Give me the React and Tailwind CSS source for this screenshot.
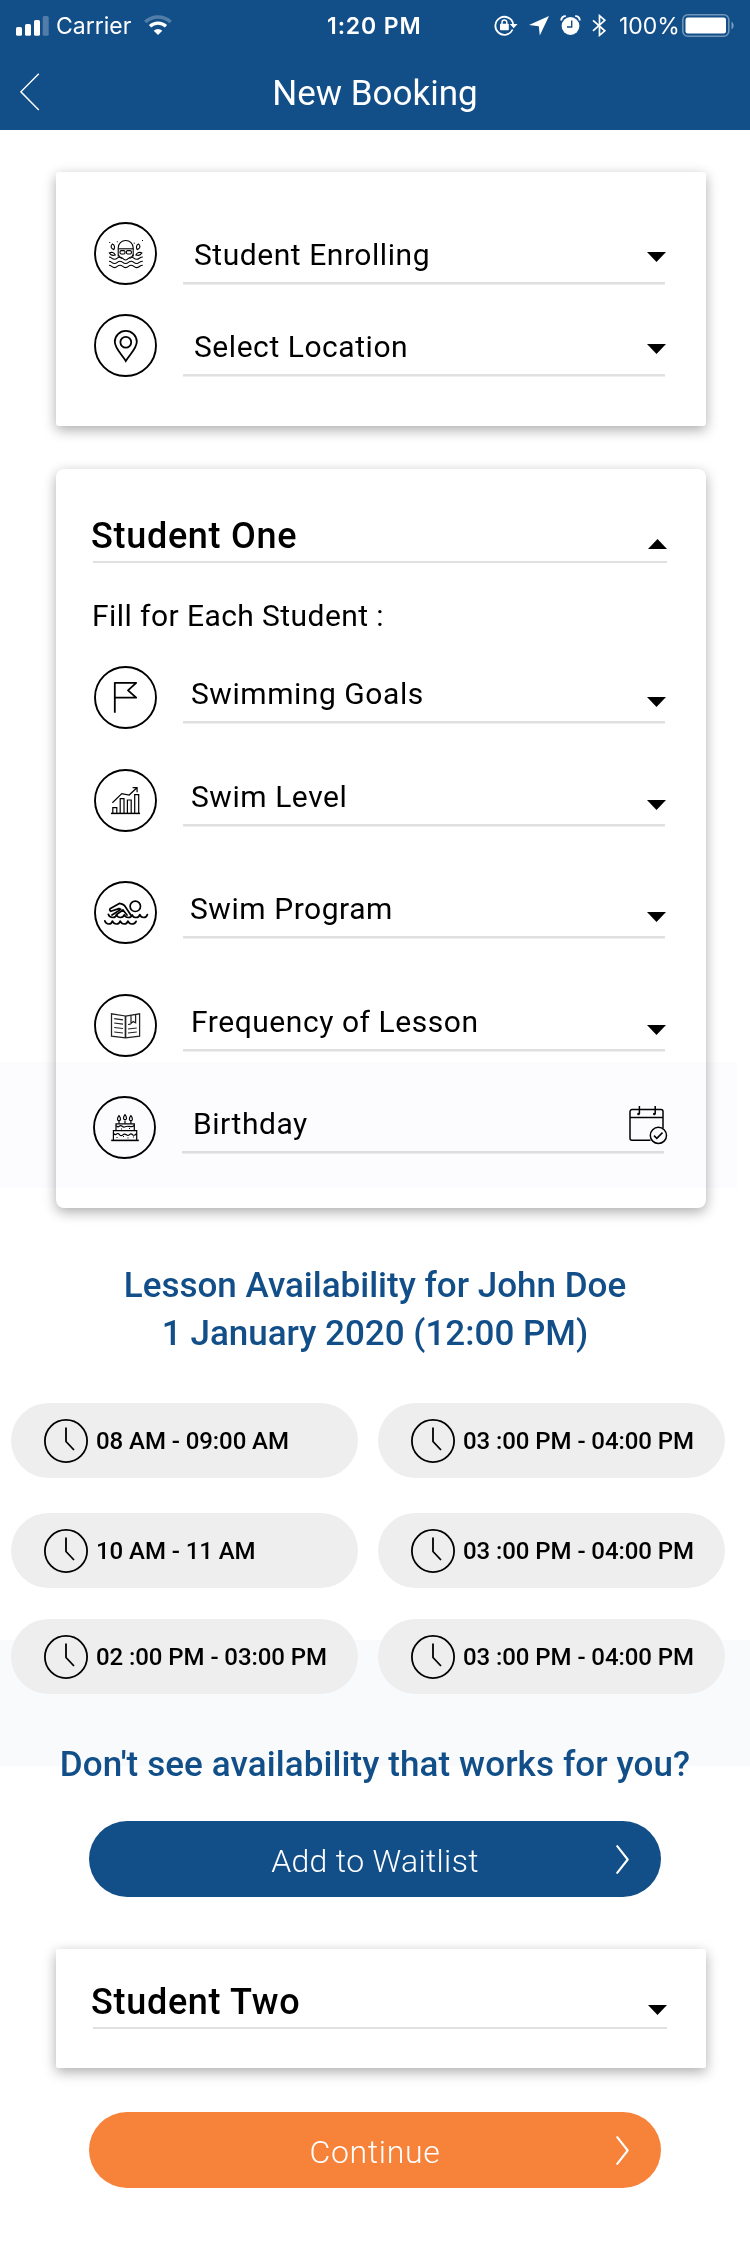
const ROBOTO = "font-['Roboto','Noto_Sans',sans-serif]";
const INTER = "font-['Inter','Liberation_Sans',sans-serif]";

function Caret({ up = false, className = "" }) {
  return (
    <svg width="19" height="10" viewBox="0 0 19 10" className={`shrink-0 ${className}`}>
      <path d={up ? "M0 10H19L9.5 0Z" : "M0 0H19L9.5 10Z"} fill="#000" />
    </svg>
  );
}

function Round({ children }) {
  return (
    <svg width="63" height="63" viewBox="0 0 63 63" fill="none" stroke="#000" strokeWidth="1.6" className="shrink-0">
      <circle cx="31.5" cy="31.5" r="30.5" strokeWidth="1.9" />
      {children}
    </svg>
  );
}

const icons = {
  swimmer: (
    <g strokeWidth="1.1">
      <path d="M24.2 34.500V26a7.500 7.500 0 0 1 15 0V34.500" />
      <path d="M24.2 26.800h15" />
      <rect x="26" y="28.600" width="5" height="3.400" rx="1.200" />
      <rect x="32.400" y="28.600" width="5" height="3.400" rx="1.200" />
      <path d="M24.500 32.500c.4 2.200 1.800 3.600 3.400 4M38.900 32.500c-.4 2.200-1.800 3.600-3.400 4" />
      <path d="M18.300 22c-2.200 2.500-1.200 4.800 1.500 5.600c1.400-2.400.9-4.600-1.500-5.600zM44.700 22c2.200 2.500 1.200 4.800-1.500 5.600c-1.400-2.400-.9-4.600 1.500-5.600z" />
      <path d="M15.300 31c2.400-1.300 4.700-.5 6 2c-2.300.8-4.500.5-6-2zM47.900 31c-2.400-1.300-4.700-.5-6 2c2.300.8 4.500.5 6-2z" />
      <path d="M15 35c2.700 0 2.700 2.300 5.500 2.300s2.800-2.300 5.500-2.300s2.700 3 5.600 3s2.800-3 5.500-3s2.700 2.300 5.500 2.300s2.800-2.300 6.200-2.300" />
      <path d="M15 39.200c2.700 0 2.700 2.300 5.500 2.300s2.800-2.300 5.500-2.300s2.700 2.300 5.600 2.300s2.800-2.300 5.500-2.300s2.700 2.300 5.500 2.300s2.800-2.300 6.200-2.300" />
      <path d="M15 43.300c2.700 0 2.700 2.300 5.500 2.300s2.800-2.300 5.500-2.300s2.700 2.300 5.600 2.300s2.800-2.300 5.500-2.300s2.700 2.300 5.500 2.300s2.800-2.300 6.200-2.300" />
      <path d="M15.200 20.500h1M22.800 19.700h1M39.800 21.300h1M48 18.500h1" />
    </g>
  ),
  pin: (
    <g strokeWidth="1.8">
      <path d="M31.800 47C28 40.500 20.800 34.500 20.800 27.800a11 11 0 0 1 22 0C42.800 34.500 35.600 40.500 31.800 47Z" />
      <circle cx="31.800" cy="28.300" r="5.400" />
    </g>
  ),
  flag: <path d="M20.800 46.800V16.800H42.200L34 24.300L42.200 31.700H20.800" strokeWidth="1.800" strokeLinejoin="round" />,
  chart: (
    <g strokeWidth="1.200">
      <path d="M17 44.400H46" strokeWidth="1.500" />
      <path d="M18.800 44V38.600h4V44M26.200 44V29.600h3.800V44M33.400 44V31h3.800V44M40.700 44V25.600h4V44" />
      <path d="M18.400 33.700L27.800 24.600L35.200 26L42.900 18.800M38.600 18.600h4.500v4.700" />
    </g>
  ),
  swim: (
    <g strokeWidth="1.700" strokeLinejoin="round" strokeLinecap="round">
      <circle cx="41.300" cy="25.300" r="5.200" />
      <path d="M36.800 34L30.500 24.500Q28.500 22.800 25.300 22.400L16.500 27.400Q14.700 29 16.800 30.300L25 27.600L26.800 28.400L18 34" />
      <path d="M29 29L22.500 33.500M29 29L33 34" />
      <path d="M14.300 33.300q1 3.200 4.700 3.200q2.800 0 3.500-2.700q1.100 2.700 4 2.700q2.900 0 3.800-2.700q1.100 2.700 4 2.700q3.300 0 3.800-2.700q1.200 2.700 4 2.700q3.100 0 3.700-3q1 3 3.900 3q2.900 0 3.700-3" />
      <path d="M10.800 39.800q1 3.200 4 3.200q3 0 3.600-3q1.200 3 4.100 3q2.900 0 3.700-3q1.200 3 4 3q3 0 3.700-3q1.200 3 4 3q3.200 0 4.200-2.600" />
    </g>
  ),
  book: (
    <g strokeWidth="1.250" stroke="#222">
      <path d="M31.500 22L17.500 19.800V42.200L31.500 43.900L45.600 42.200V19.800Z" />
      <path d="M31.500 22V44" strokeWidth="1.700" />
      <path d="M20.200 24.600l8.800 1.300M20.200 29l8.800 1.100M20.200 33.500l8.800 1M20.200 38l8.800 1M34 30.500l2.500-.3M34 35l8.800-1M34 39l8.800-1" />
      <path d="M37 21.200V29.500l2.200-1.900l2.400 1.200V20.500" />
    </g>
  ),
  cake: (
    <g strokeWidth="1.200">
      <path d="M18.200 44.400H45.800" strokeWidth="1.600" />
      <path d="M20.400 44V34.700H43.700V44M23 34.300V27.800H41.300V34.300" />
      <path d="M20.400 37.500q1.500 1.800 3.200.5t3 .9q1.700 1.400 3.200 0t3.500-.3q1.600 1.400 3.200 0t3.300.4q1.800.9 3.900-1.500" />
      <path d="M23 29.500q1.600 2 3.200.8t3 0t2.900.5t3-.5t3 .4t3.200-1.200" />
      <path d="M26 27.800V25M32 27.800V24.500M37.900 27.800V25" />
      <path d="M26 19.700c-2 2.500-2 5 0 5s2-2.500 0-5zM32 18.700c-2 2.500-2 5 0 5s2-2.500 0-5zM37.900 19.700c-2 2.500-2 5 0 5s2-2.500 0-5z" />
      <path d="M23.500 41.500h1M30 40.500h1M28 33h1M34.500 42h1M36 32.500h1M40 41h1" />
    </g>
  ),
};

function Field({ icon, label, textClass, lineClass = "h-[57px]", caretClass = "mt-[31px]", className = "", end }) {
  return (
    <div className={`flex h-[63px] items-start ${className}`}>
      <Round>{icons[icon]}</Round>
      <div className={`ml-[26px] flex w-[482px] items-start justify-between border-b-2 border-[#e0e0e0] shadow-[0_1px_0_#eeeeee] ${lineClass}`}>
        <span className={`text-[30px] leading-[40px] tracking-[0.55px] whitespace-nowrap ${textClass}`}>{label}</span>
        {end || <Caret className={`-mr-px ${caretClass}`} />}
      </div>
    </div>
  );
}

function StudentHeader({ name, up }) {
  return (
    <div className="ml-[37px] flex h-[42px] w-[574px] items-start justify-between border-b-2 border-[#e0e0e0]">
      <span className="-ml-[2px] text-[36px] leading-[30px] font-medium tracking-[0.7px]">{name}</span>
      <Caret up={up} className="mt-[18px]" />
    </div>
  );
}

function CalendarCheck() {
  return (
    <svg width="39" height="39" viewBox="0 0 39 39" fill="none" stroke="#000" strokeWidth="1.500" className="mt-[10px] -mr-[4px] shrink-0">
      <path d="M21.500 34.300H3a2 2 0 0 1-2-2V5.600a2 2 0 0 1 2-2H32a2 2 0 0 1 2 2V22.500M1 11.500H34" />
      <path d="M10.400 0V8M26.200 0V8" />
      <circle cx="9.500" cy="8" r="1.300" fill="#000" stroke="none" />
      <circle cx="25.300" cy="8" r="1.300" fill="#000" stroke="none" />
      <circle cx="29.400" cy="29.400" r="8.100" />
      <path d="M25 29.600L27.800 32.400L33.500 26.600" />
    </svg>
  );
}

function Slot({ time }) {
  return (
    <div className="flex h-[75px] w-[347px] items-center rounded-full bg-[#eeeeee] pl-[33px]">
      <svg width="44" height="44" viewBox="0 0 44 44" fill="none" stroke="#000" strokeWidth="1.800" className="shrink-0">
        <circle cx="22" cy="22" r="21.100" />
        <path d="M22 8.500V22.500L30 31" />
      </svg>
      <span className="ml-2 text-[24px] leading-[30px] font-medium tracking-[-0.07px] whitespace-nowrap">{time}</span>
    </div>
  );
}

function PillButton({ label, className }) {
  return (
    <button className={`ml-[89px] grid h-[76px] w-[572px] grid-cols-[45px_1fr_45px] items-center rounded-full text-white ${className}`}>
      <span />
      <span className="pt-[4px] text-center text-[32px] leading-[40px] font-light">{label}</span>
      <svg width="13" height="29" viewBox="0 0 13 29" fill="none" stroke="#fff" strokeWidth="2.100" strokeLinecap="round" strokeLinejoin="round">
        <path d="M1.200 1.200L11.700 14.500L1.200 27.800" />
      </svg>
    </button>
  );
}

function StatusBar() {
  return (
    <div className={`flex h-[51px] items-center text-[23px] leading-[30px] ${INTER}`}>
      <svg width="33" height="20" viewBox="0 0 33 20" fill="#fff" className="ml-4 shrink-0">
        <rect x="0" y="11" width="6" height="8.700" rx="1.500" />
        <rect x="9" y="8" width="6" height="11.700" rx="1.500" />
        <rect x="18" y="4" width="6" height="15.700" rx="1.500" />
        <rect x="26.700" y="0" width="6" height="19.700" rx="1.500" opacity=".27" />
      </svg>
      <span className="ml-[7px] w-[76px]">Carrier</span>
      <svg width="28" height="21" viewBox="0 0 28 21" fill="none" className="ml-[12px] shrink-0">
        <path d="M1.300 7A18.500 18.500 0 0 1 26.700 7" stroke="#fff" strokeWidth="3.600" opacity=".27" />
        <path d="M6 11.300A11.800 11.800 0 0 1 22 11.300" stroke="#fff" strokeWidth="3.300" />
        <path d="M14 20L9.700 15.800A6.300 6.300 0 0 1 18.300 15.800Z" fill="#fff" />
      </svg>
      <span className="ml-[155px] w-[96px] font-semibold tracking-[0.9px] whitespace-nowrap">1:20 PM</span>
      <svg width="24" height="21" viewBox="0 0 24 21" fill="none" stroke="#fff" className="ml-[71px] shrink-0">
        <path d="M18.600 14.500A9 9 0 1 1 19.200 9" strokeWidth="1.800" />
        <path d="M15.800 9H23.500L19.700 13.200Z" fill="#fff" stroke="none" />
        <rect x="6" y="8.800" width="8.800" height="6.500" rx=".8" fill="#fff" stroke="none" />
        <path d="M8 9.500V7.300a2.400 2.400 0 0 1 4.800 0V9.500" strokeWidth="1.500" />
      </svg>
      <svg width="20" height="20" viewBox="0 0 20 20" fill="#fff" className="ml-[11px] shrink-0">
        <path d="M20 0L10.800 19.500L9.800 10.200L0 9Z" />
      </svg>
      <svg width="21" height="21" viewBox="0 0 21 21" className="ml-[11px] shrink-0">
        <circle cx="10.500" cy="11" r="8.900" fill="#fff" />
        <path d="M1.300 5.500A4 4 0 0 1 5.800 1.200M19.700 5.500A4 4 0 0 0 15.200 1.200" fill="none" stroke="#fff" strokeWidth="1.900" />
        <path d="M11.700 5.500V12H7" fill="none" stroke="#124e88" strokeWidth="1.400" />
      </svg>
      <svg width="15" height="23" viewBox="0 0 15 23" fill="none" stroke="#fff" strokeWidth="1.700" className="ml-[11px] shrink-0">
        <path d="M1 6.300L12.800 16.800L7.500 21.300V1.700L12.800 6.300L1 16.800" />
      </svg>
      <span className="ml-[12px] w-[63px]">100%</span>
      <svg width="52" height="23" viewBox="0 0 52 23" fill="none" className="shrink-0">
        <rect x=".8" y=".8" width="46" height="21.400" rx="5" stroke="#fff" strokeWidth="1.600" opacity=".4" />
        <rect x="3.500" y="3.600" width="40.500" height="15.800" rx="2.200" fill="#fff" />
        <path d="M49.500 7.500a4.800 4.800 0 0 1 0 8z" fill="#fff" opacity=".45" />
      </svg>
    </div>
  );
}

const CARD = "relative ml-[56px] w-[650px] bg-white shadow-[0_4px_13px_rgba(0,0,0,0.33)]";

export default function App() {
  return (
    <div className={`relative isolate flex h-[2267px] w-[750px] flex-col overflow-hidden bg-white text-black ${ROBOTO}`}>
      {/* tinted bands: one behind the time slots, one washing over the birthday row */}
      <div className="absolute top-[1640px] left-0 -z-10 h-[126px] w-[750px] bg-[#f9fafc]" />
      <div className="pointer-events-none absolute top-[1062px] left-0 z-10 h-[126px] w-[737px] bg-[#fcfcfe] mix-blend-multiply" />

      <header className="h-[130px] shrink-0 bg-[#124e88] text-white">
        <StatusBar />
        <div className="grid h-[79px] grid-cols-[60px_1fr_60px] items-center">
          <svg width="20" height="38" viewBox="0 0 20 38" fill="none" stroke="#fff" strokeWidth="1.400" className="ml-5 mt-[2px]">
            <path d="M18.800 .7L.9 18.800L18.800 37" />
          </svg>
          <h1 className="pt-[6px] text-center text-[35px] leading-[44px]">New Booking</h1>
        </div>
      </header>

      <section className={`mt-[42px] h-[254px] shrink-0 rounded-[3px] pt-[50px] pl-[38px] ${CARD}`}>
        <Field icon="swimmer" label="Student Enrolling" textClass="mt-[13px] ml-[11px]" lineClass="h-[62px]" caretClass="mt-[30px]" />
        <Field icon="pin" label="Select Location" textClass="mt-[13px] ml-[11px]" lineClass="h-[62px]" caretClass="mt-[30px]" className="mt-[29px]" />
      </section>

      <section className={`mt-[43px] h-[739px] shrink-0 rounded-[8px] pt-[52px] ${CARD}`}>
        <StudentHeader name="Student One" up />
        <p className="mt-[33px] ml-[36px] text-[30px] leading-[40px] tracking-[0.43px]">Fill for Each Student :</p>
        <div className="mt-[30px] pl-[38px]">
          <Field icon="flag" label="Swimming Goals" textClass="mt-[8px] ml-[8px]" />
          <Field icon="chart" label="Swim Level" textClass="mt-[8px] ml-[8px]" className="mt-[40px]" />
          <Field icon="swim" label="Swim Program" textClass="mt-[8px] ml-[7px]" className="mt-[49px]" />
          <Field icon="book" label="Frequency of Lesson" textClass="mt-[8px] ml-[8px]" className="mt-[50px]" />
          <Field icon="cake" label="Birthday" textClass="mt-[8px] ml-[11px]" className="mt-[39px] -ml-px" end={<CalendarCheck />} />
        </div>
      </section>

      <h2 className="mt-[54px] text-center text-[35px] leading-[48px] font-medium text-[#124e88]">
        Lesson Availability for John Doe
        <br />1 January 2020 (12:00 PM)
      </h2>

      <div className="mt-[45px] ml-[11px] flex flex-col">
        <div className="flex gap-5">
          <Slot time="08 AM - 09:00 AM" />
          <Slot time="03 :00 PM - 04:00 PM" />
        </div>
        <div className="mt-[35px] flex gap-5">
          <Slot time="10 AM - 11 AM" />
          <Slot time="03 :00 PM - 04:00 PM" />
        </div>
        <div className="mt-[31px] flex gap-5">
          <Slot time="02 :00 PM - 03:00 PM" />
          <Slot time="03 :00 PM - 04:00 PM" />
        </div>
      </div>

      <h2 className="mt-[47px] text-center text-[35px] leading-[48px] font-medium tracking-[0.1px] text-[#124e88]">
        Don't see availability that works for you?
      </h2>

      <PillButton label="Add to Waitlist" className="mt-[32px] shrink-0 bg-[#124e88] tracking-[0.32px]" />

      <section className={`mt-[52px] h-[119px] shrink-0 rounded-[2px] pt-[38px] ${CARD}`}>
        <StudentHeader name="Student Two" />
      </section>

      <PillButton label="Continue" className="mt-[44px] shrink-0 bg-[#f78239] tracking-[0.7px]" />
    </div>
  );
}
